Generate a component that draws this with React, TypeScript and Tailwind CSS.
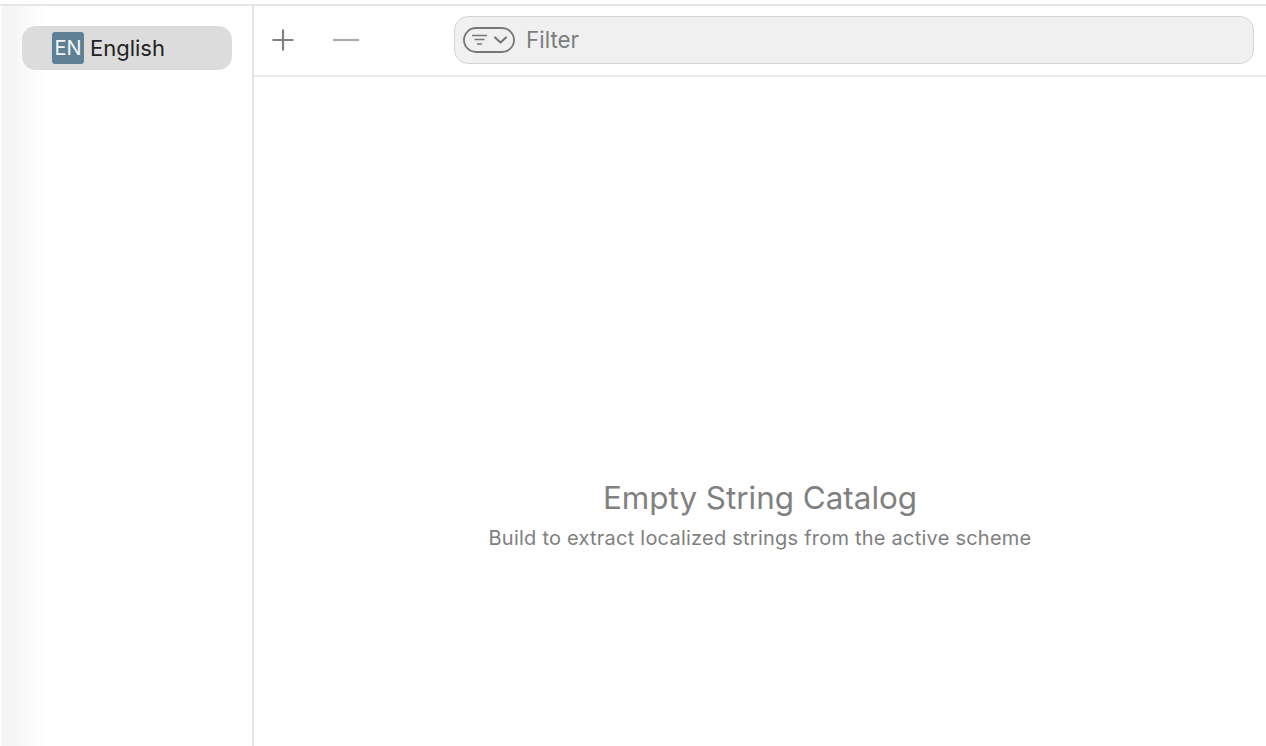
const fontStack = { fontFamily: "Inter, 'Liberation Sans', sans-serif" };

function FilterPill() {
  return (
    <svg width="52" height="26" viewBox="0 0 52 26" fill="none" className="shrink-0">
      <rect x="1" y="1" width="50" height="24" rx="12" stroke="#777777" strokeWidth="1.8" />
      <path d="M9 8.5H24M11.5 12.5H21.5M14 17H19" stroke="#777777" strokeWidth="1.6" />
      <path d="M32 10.5L37.5 15.5L43 10.5" stroke="#777777" strokeWidth="2.2" strokeLinecap="round" strokeLinejoin="round" />
    </svg>
  );
}

export default function App() {
  return (
    <div className="h-[746px] w-[1266px] overflow-hidden bg-white pt-1" style={fontStack}>
      <div className="flex h-full flex-col border-t-2 border-[#e6e6e6]">
        <div className="flex min-h-0 flex-1">
          <aside className="w-[254px] shrink-0 border-r-2 border-[#e4e4e4] bg-[linear-gradient(to_right,#ffffff_1px,#f5f5f5_2px,#f5f5f5_12px,#ffffff_46px)] pl-[22px] pr-[20px] pt-5">
            <div className="flex h-11 items-center gap-[6px] rounded-[14px] bg-[#dcdcdc] pl-[30px]">
              <span className="flex h-8 w-8 items-center justify-center rounded-[3px] bg-[#5f7f95] text-[20px] text-[#f1f5f8]">
                EN
              </span>
              <span className="text-[22px] text-[#222222]">English</span>
            </div>
          </aside>

          <main className="flex min-w-0 flex-1 flex-col">
            <div className="flex h-[71px] items-center border-b-2 border-[#ebebeb] pb-[2px] pl-[17px] pr-[12px]">
              <svg width="24" height="24" viewBox="0 0 24 24" fill="none" className="shrink-0">
                <path d="M12 1.5V22.5M1.5 12H22.5" stroke="#808080" strokeWidth="2.2" />
              </svg>
              <svg width="28" height="24" viewBox="0 0 28 24" fill="none" className="ml-[37px] shrink-0">
                <path d="M1 12H27" stroke="#acacac" strokeWidth="2.2" />
              </svg>
              <div className="ml-[94px] flex h-12 flex-1 items-center gap-[11px] rounded-[14px] border border-[#d6d6d6] bg-[#f0f0f0] pl-2">
                <FilterPill />
                <span className="text-[22.4px] text-[#7d7d7d]">Filter</span>
              </div>
            </div>

            <div className="flex flex-1 flex-col items-center justify-center pt-[207px] text-[#808080]">
              <h1 className="text-[31.4px] leading-10 font-normal">Empty String Catalog</h1>
              <p className="mt-[6px] text-[20px] leading-7 tracking-[0.23px]">
                Build to extract localized strings from the active scheme
              </p>
            </div>
          </main>
        </div>
      </div>
    </div>
  );
}
